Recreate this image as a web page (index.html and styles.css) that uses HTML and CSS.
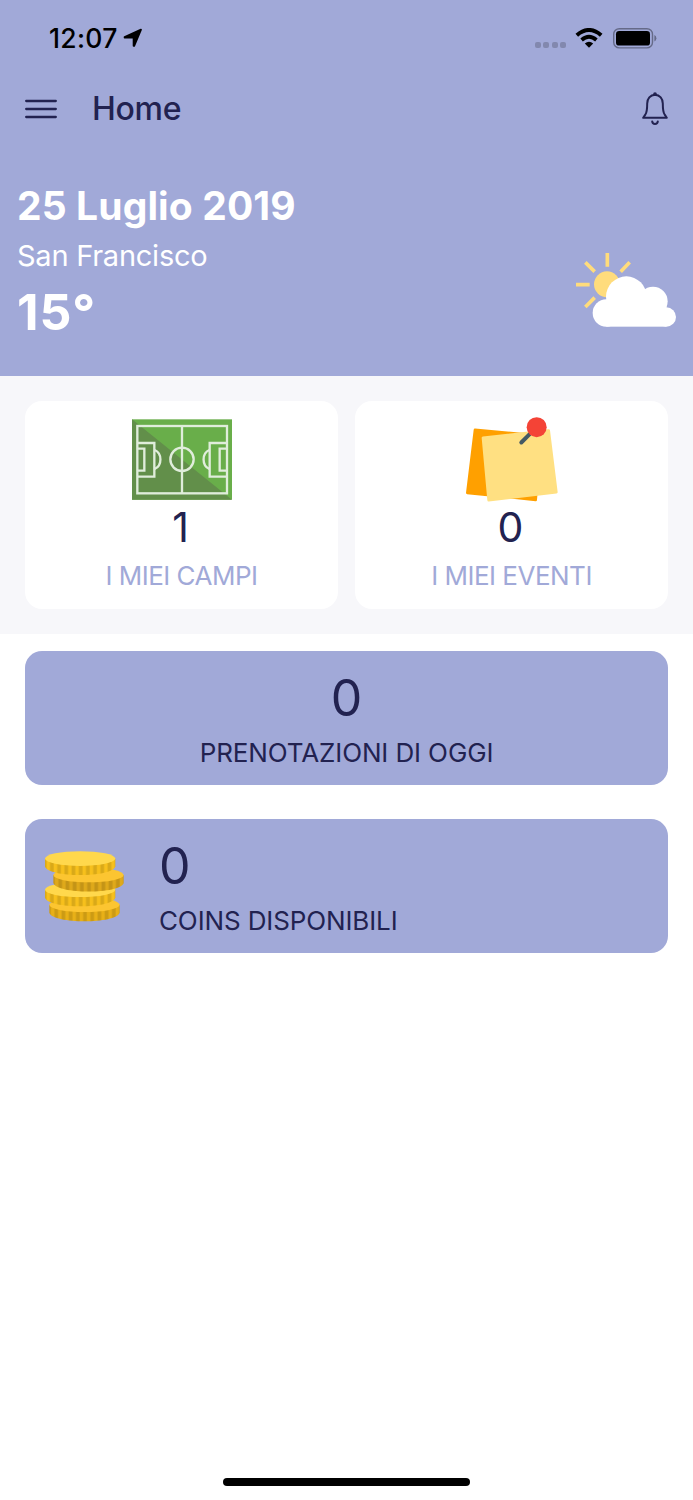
FILE: index.html
```html
<!DOCTYPE html>
<html lang="it">
<head>
    <meta charset="UTF-8">
    <meta name="viewport" content="width=device-width, initial-scale=1.0">
    <title>Home</title>
    <link rel="stylesheet" href="styles.css">
</head>
<body>
    <div class="app">
        <header class="top">
            <div class="status-bar">
                <span class="time">12:07</span>
                <svg class="location" width="20" height="20" viewBox="0 0 20 20">
                    <path d="M18 1.6 L11.2 17.8 H10.6 V9.6 H1.6 V9.1 Z" stroke="#000" stroke-width="1.8" stroke-linejoin="round"/>
                </svg>
                <div class="status-icons">
                    <div class="signal"><i></i><i></i><i></i><i></i></div>
                    <svg class="wifi" width="28" height="20" viewBox="0 0 28 20">
                        <path d="M1.8 7.2 Q14 -3.2 26.2 7.2" fill="none" stroke="#000" stroke-width="4"/>
                        <path d="M6.6 12 Q14 5.6 21.4 12" fill="none" stroke="#000" stroke-width="3.8"/>
                        <path d="M9.8 15.6 Q14 12 18.2 15.6 L14 19.8 Z"/>
                    </svg>
                    <svg class="battery" width="44" height="21" viewBox="0 0 44 21">
                        <rect x="0.7" y="0.7" width="38.8" height="19.2" rx="5.6" fill="none" stroke="#656a88" stroke-width="1.4"/>
                        <rect x="3" y="3" width="34" height="14.6" rx="3.2"/>
                        <path d="M41.4 7 Q43.4 8 43.4 10.3 Q43.4 12.6 41.4 13.6 Z" fill="#656a88"/>
                    </svg>
                </div>
            </div>

            <nav class="nav-bar">
                <svg class="menu" width="32" height="20" viewBox="0 0 32 20">
                    <path d="M1.2 2 H30.8 M1.2 10 H30.8 M1.2 18 H30.8" fill="none" stroke="#222250" stroke-width="2.3" stroke-linecap="round"/>
                </svg>
                <h1 class="title">Home</h1>
                <svg class="bell" width="26" height="34" viewBox="0 0 26 34">
                    <g fill="none" stroke="#222250" stroke-width="2" stroke-linecap="round" stroke-linejoin="round">
                        <path d="M13 2.8 C8.2 3 5.2 6.8 5.2 11.5 C5.2 18 4.9 20.5 3.3 22.6 L1.2 25.8 H24.8 L22.7 22.6 C21.1 20.5 20.8 18 20.8 11.5 C20.8 6.8 17.8 3 13 2.8 Z"/>
                        <path d="M10.2 29.4 C10.5 32.7 15.5 32.7 15.8 29.4"/>
                    </g>
                    <circle cx="13" cy="2.2" r="1.9" fill="#222250"/>
                </svg>
            </nav>

            <section class="weather">
                <div class="weather-info">
                    <div class="date">25 Luglio 2019</div>
                    <div class="city">San Francisco</div>
                    <div class="temp">15°</div>
                </div>
                <svg class="weather-icon" width="100" height="74" viewBox="0 0 300 222">
                    <g fill="none" stroke="#ffdc7c" stroke-width="11">
                        <path d="M94 0 V41 M0 95 H41 M28 28 L56 56 M161 28 L134 56 M56 134 L28 162"/>
                    </g>
                    <circle cx="93" cy="94" r="39" fill="#ffdc7c"/>
                    <g fill="#fff">
                        <circle cx="91" cy="180" r="41"/>
                        <circle cx="151" cy="131" r="61"/>
                        <circle cx="231" cy="145" r="44"/>
                        <circle cx="271" cy="192" r="29"/>
                        <rect x="91" y="150" width="180" height="71"/>
                    </g>
                </svg>
            </section>
        </header>

        <section class="stats">
            <div class="card">
                <div class="card-icon">
                    <svg width="100" height="81" viewBox="0 0 300 241">
                        <rect width="300" height="241" fill="#69ae4a"/>
                        <path d="M0 0 V241 H300 Z" fill="#628f4a"/>
                        <g fill="none" stroke="#e0eddb" stroke-width="7">
                            <rect x="16" y="20" width="269" height="202"/>
                            <path d="M150 20 V222"/>
                            <circle cx="150" cy="120" r="35"/>
                            <path d="M16 71 H67 V172 H16 M16 88 H37 V154 H16"/>
                            <path d="M285 71 H233 V172 H285 M285 88 H263 V154 H285"/>
                            <path d="M68 92 C91 102 91 139 68 149 M232 92 C209 102 209 139 232 149"/>
                        </g>
                    </svg>
                </div>
                <div class="card-number">1</div>
                <div class="card-label fields">I MIEI CAMPI</div>
            </div>

            <div class="card">
                <div class="card-icon">
                    <svg width="92" height="85" viewBox="137 66 276 254">
                        <path d="M164 104 L362 122 L346 314 L141 293 Z" fill="#ffa000" stroke="#ffa000" stroke-width="8" stroke-linejoin="round"/>
                        <path d="M188 128 L385 106 L408 291 L205 315 Z" fill="#ffe082" stroke="#ffe082" stroke-width="8" stroke-linejoin="round"/>
                        <path d="M328 117 L303 142" stroke="#455a64" stroke-width="12" stroke-linecap="round"/>
                        <circle cx="349" cy="96" r="30" fill="#f44336"/>
                    </svg>
                </div>
                <div class="card-number">0</div>
                <div class="card-label">I MIEI EVENTI</div>
            </div>
        </section>

        <main class="content">
            <div class="row center">
                <div class="row-text">
                    <div class="row-number">0</div>
                    <div class="row-label">PRENOTAZIONI DI OGGI</div>
                </div>
            </div>

            <div class="row">
                <svg class="coins" width="79" height="71" viewBox="104 123 236 211">
                    <defs>
                        <pattern id="ridges" width="21.5" height="80" patternUnits="userSpaceOnUse">
                            <rect x="15" width="6.5" height="80" fill="#000" fill-opacity="0.12"/>
                            <rect width="4.5" height="80" fill="#000" fill-opacity="0.12"/>
                        </pattern>
                    </defs>
                    <!-- dal basso verso l'alto -->
                    <g transform="translate(117 261)">
                        <path d="M0 22 V46 C10 80 200 80 210 46 V22 Z" fill="#e8b017"/>
                        <path d="M0 22 V46 C10 80 200 80 210 46 V22 Z" fill="url(#ridges)"/>
                        <ellipse cx="105" cy="22" rx="105" ry="22" fill="#fcc531"/>
                    </g>
                    <g transform="translate(104 216)">
                        <path d="M0 22 V46 C10 80 200 80 210 46 V22 Z" fill="#f7c01c"/>
                        <path d="M0 22 V46 C10 80 200 80 210 46 V22 Z" fill="url(#ridges)"/>
                        <ellipse cx="105" cy="22" rx="105" ry="22" fill="#ffd84c"/>
                    </g>
                    <g transform="translate(129 172)">
                        <path d="M0 22 V46 C10 80 200 80 210 46 V22 Z" fill="#dfa91a"/>
                        <path d="M0 22 V46 C10 80 200 80 210 46 V22 Z" fill="url(#ridges)"/>
                        <ellipse cx="105" cy="22" rx="105" ry="22" fill="#fcc531"/>
                    </g>
                    <g transform="translate(104 123)">
                        <path d="M0 22 V46 C10 80 200 80 210 46 V22 Z" fill="#f7c01c"/>
                        <path d="M0 22 V46 C10 80 200 80 210 46 V22 Z" fill="url(#ridges)"/>
                        <ellipse cx="105" cy="22" rx="105" ry="22" fill="#ffd84c"/>
                    </g>
                </svg>
                <div class="row-text">
                    <div class="row-number">0</div>
                    <div class="row-label">COINS DISPONIBILI</div>
                </div>
            </div>
        </main>

        <div class="home-indicator"></div>
    </div>
</body>
</html>
```
FILE: styles.css
```css
* {
    box-sizing: border-box;
}

body {
    font-family: Inter, "Liberation Sans", sans-serif;
    margin: 0;
    padding: 0;
    background-color: #fff;
    color: #222250;
}

svg {
    display: block;
    flex-shrink: 0;
}

.app {
    display: flex;
    flex-direction: column;
    width: 693px;
    height: 1500px;
}

.top {
    height: 376px;
    background-color: #a1a9d8;
}

/* Barra di stato */
.status-bar {
    display: flex;
    align-items: center;
    height: 76px;
    padding: 0 36px 0 49px;
}

.time {
    width: 74px;
    font-size: 26.5px;
    font-weight: 500;
    letter-spacing: 0.3px;
    color: #000;
    white-space: nowrap;
}

.status-icons {
    display: flex;
    align-items: center;
    margin-left: auto;
}

.signal {
    display: flex;
    gap: 2.4px;
    margin: 14px 9px 0 0;
}

.signal i {
    width: 6px;
    height: 6px;
    border-radius: 2px;
    background-color: #8288ae;
}

.wifi {
    margin-right: 10px;
}

/* Barra di navigazione */
.nav-bar {
    display: flex;
    align-items: center;
    height: 65px;
    padding: 0 25px;
}

.title {
    margin: 0 0 0 35px;
    font-size: 32px;
    font-weight: 500;
    line-height: 40px;
    letter-spacing: -0.3px;
}

.bell {
    margin-left: auto;
}

/* Meteo */
.weather {
    display: flex;
    justify-content: space-between;
    align-items: flex-start;
    padding: 41px 17px 0;
    color: #fff;
}

.date {
    font-size: 39px;
    font-weight: 700;
    line-height: 47px;
    letter-spacing: 0.12px;
}

.city {
    font-size: 29px;
    line-height: 54px;
    letter-spacing: -0.25px;
}

.temp {
    font-size: 50px;
    font-weight: 700;
    line-height: 59px;
    letter-spacing: 1px;
}

.weather-icon {
    margin-top: 71px;
}

/* Riquadri */
.stats {
    display: flex;
    gap: 17px;
    height: 258px;
    padding: 25px;
    background-color: #f7f7fa;
}

.card {
    flex: 1;
    padding-top: 8px;
    border-radius: 17px;
    background-color: #fff;
    text-align: center;
}

.card-icon {
    display: flex;
    align-items: center;
    justify-content: center;
    height: 100px;
}

.card-number {
    padding-right: 2px;
    font-size: 41px;
    line-height: 36px;
}

.card-label {
    font-size: 26px;
    line-height: 62px;
    letter-spacing: -0.5px;
    color: #a1a9d8;
}

/* Righe */
.content {
    display: flex;
    flex-direction: column;
    gap: 34px;
    padding: 17px 25px;
}

.row {
    display: flex;
    align-items: center;
    height: 134px;
    padding-left: 19.5px;
    border-radius: 17px;
    background-color: #a1a9d8;
}

.center {
    justify-content: center;
    padding-left: 0;
    text-align: center;
}

.coins {
    margin-right: 35.5px;
}

.row-number {
    margin-top: 14px;
    font-size: 50px;
    line-height: 54px;
}

.row-label {
    font-size: 26px;
    line-height: 55px;
    letter-spacing: -0.12px;
}

.home-indicator {
    width: 247px;
    height: 8px;
    margin: auto auto 14px;
    border-radius: 4px;
    background-color: #000;
}
```
